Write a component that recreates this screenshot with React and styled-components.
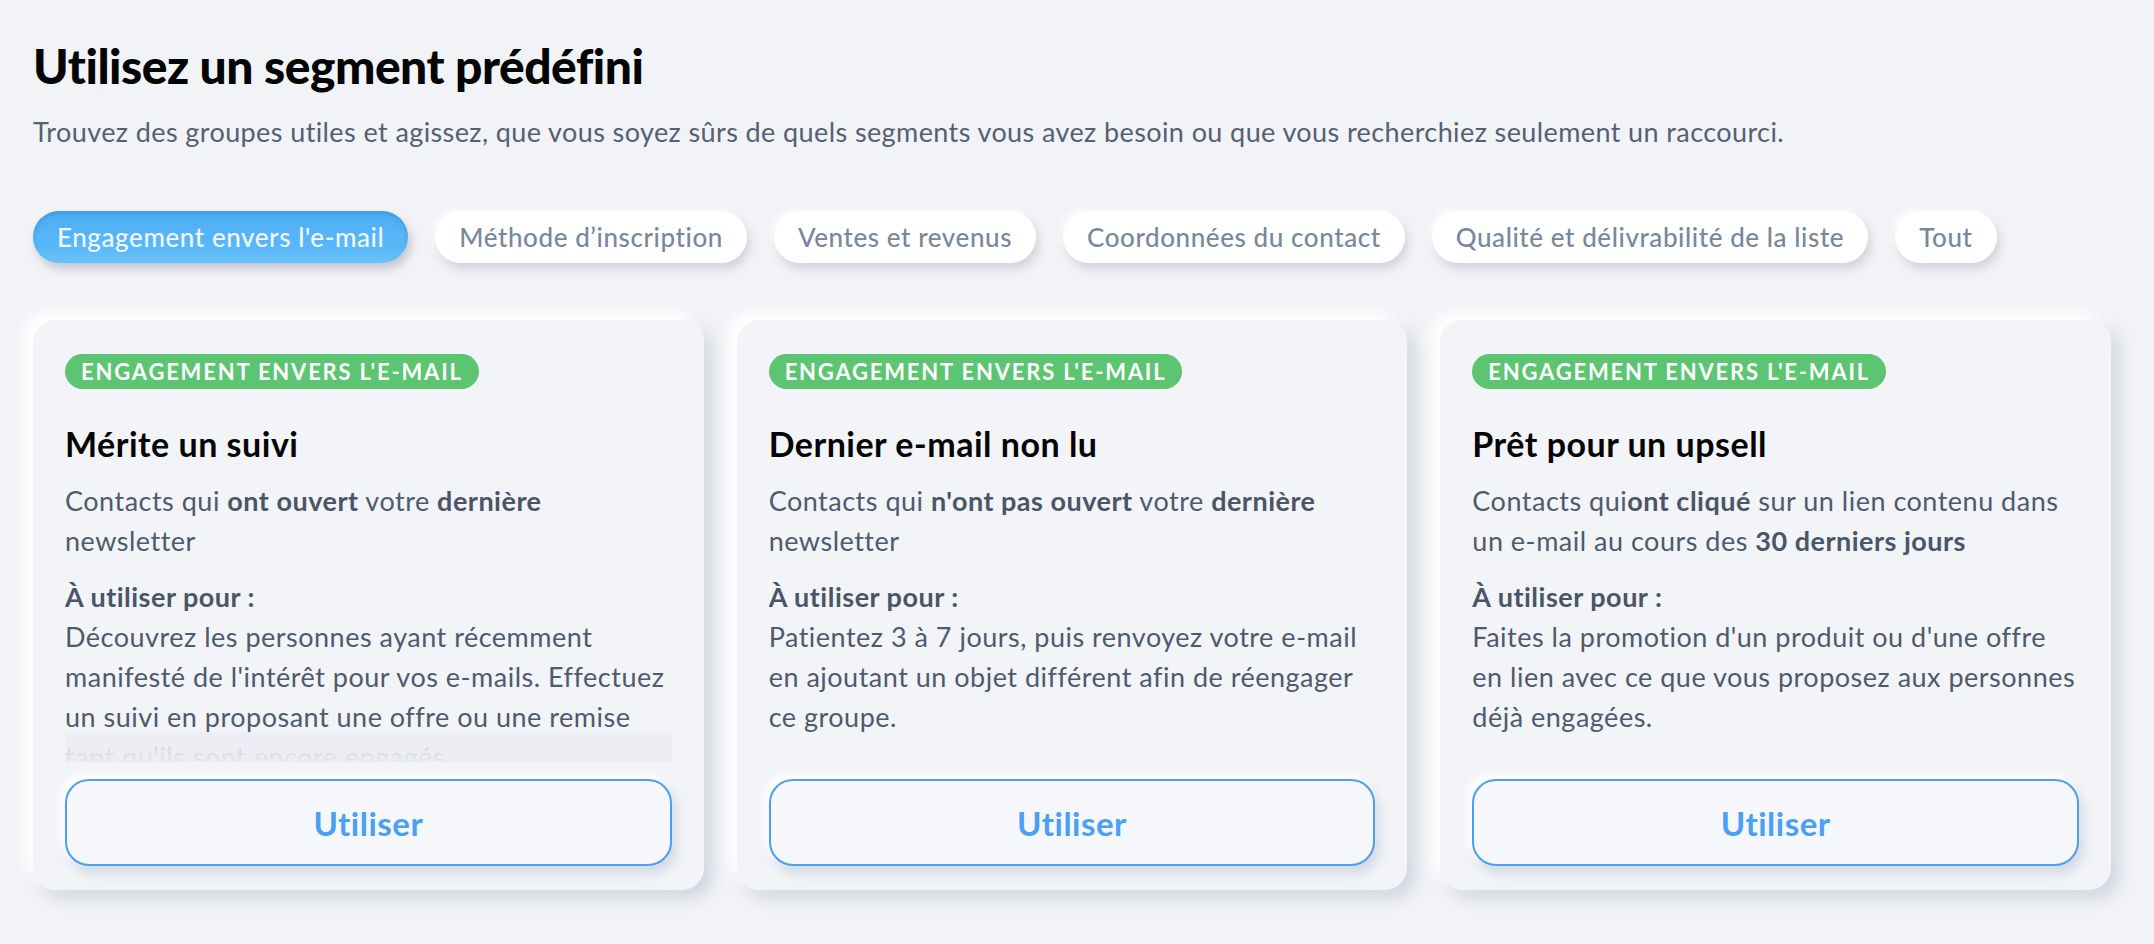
import React from 'react';
import styled, { createGlobalStyle } from 'styled-components';

const GlobalStyle = createGlobalStyle`
  * {
    box-sizing: border-box;
  }

  body {
    margin: 0;
    background-color: #f2f3f7;
    font-family: Lato, 'Noto Sans', sans-serif;
  }
`;

const Page = styled.div`
  padding: 38px 43px 40px 33px;
`;

const Title = styled.h1`
  margin: 0;
  font-size: 48px;
  line-height: 56px;
  font-weight: 900;
  color: #050505;
  letter-spacing: -0.5px;
`;

const Subtitle = styled.p`
  margin: 20px 0 0;
  font-size: 27px;
  line-height: 36px;
  letter-spacing: 0.4px;
  color: #556074;
`;

const Tabs = styled.div`
  display: flex;
  gap: 27px;
  margin-top: 61px;
`;

const Tab = styled.button`
  height: 52px;
  padding: 0 24px;
  border: none;
  border-radius: 26px;
  font-family: inherit;
  font-size: 26px;
  font-weight: 500;
  letter-spacing: 0.58px;
  cursor: pointer;
  color: ${({ $active }) => ($active ? '#f1f7fd' : '#78889c')};
  background: ${({ $active }) =>
    $active ? 'linear-gradient(180deg, #4eaef3 0%, #58b8f9 70%, #6cc2fa 100%)' : '#ffffff'};
  box-shadow: ${({ $active }) =>
    $active
      ? 'inset 0 3px 4px rgba(40, 120, 190, 0.35), 3px 6px 10px rgba(90, 100, 120, 0.3)'
      : '3px 6px 10px rgba(90, 100, 120, 0.22), -2px -2px 6px rgba(255, 255, 255, 0.9)'};
`;

const Grid = styled.div`
  display: grid;
  grid-template-columns: repeat(3, 1fr);
  gap: 33px;
  margin-top: 57px;
`;

const Card = styled.div`
  display: flex;
  flex-direction: column;
  height: 570px;
  padding: 34px 32px 24px;
  border-radius: 22px;
  background-color: #f2f4f8;
  box-shadow: -8px -8px 16px #ffffff, 8px 8px 16px rgba(165, 175, 192, 0.45);
`;

const Badge = styled.span`
  align-self: flex-start;
  height: 35px;
  padding: 0 16px;
  border-radius: 18px;
  background-color: #5bc571;
  color: #ffffff;
  font-size: 22px;
  line-height: 35px;
  font-weight: 700;
  letter-spacing: 1.8px;
  text-transform: uppercase;
`;

const CardTitle = styled.h2`
  margin: 34px 0 0;
  font-size: 34px;
  line-height: 42px;
  font-weight: 700;
  color: #050505;
  letter-spacing: 0.5px;
`;

const Body = styled.div`
  position: relative;
  flex: 1;
  margin-top: 16px;
  overflow: hidden;
  color: #4f5a6e;
  font-size: 27px;
  line-height: 40px;
  letter-spacing: 0.5px;

  p {
    margin: 0;
  }

  b {
    font-weight: 700;
    color: #4a5568;
  }
`;

const UseLabel = styled.p`
  && {
    margin-top: 16px;
  }
  font-weight: 700;
  color: #4a5568;
`;

const Fade = styled.div`
  position: absolute;
  left: 0;
  right: 0;
  bottom: 0;
  height: 30px;
  background: linear-gradient(180deg, rgba(235, 237, 242, 0.75) 0%, rgba(235, 237, 242, 0.96) 100%);
`;

const UseButton = styled.button`
  height: 87px;
  margin-top: 17px;
  border: 2px solid #4a9ff0;
  border-radius: 24px;
  background-color: #f6f7fb;
  color: #4aa0f5;
  font-family: inherit;
  font-size: 33px;
  font-weight: 700;
  letter-spacing: 0.5px;
  cursor: pointer;
  box-shadow: -5px -5px 10px #ffffff, 4px 7px 12px rgba(150, 160, 180, 0.35);
`;

const tabs = [
  "Engagement envers l'e-mail",
  'Méthode d’inscription',
  'Ventes et revenus',
  'Coordonnées du contact',
  'Qualité et délivrabilité de la liste',
  'Tout',
];

const segments = [
  {
    title: 'Mérite un suivi',
    desc: (
      <>
        Contacts qui <b>ont ouvert</b> votre <b>dernière</b> newsletter
      </>
    ),
    use: "Découvrez les personnes ayant récemment manifesté de l'intérêt pour vos e-mails. Effectuez un suivi en proposant une offre ou une remise tant qu'ils sont encore engagés.",
    clipped: true,
  },
  {
    title: 'Dernier e-mail non lu',
    desc: (
      <>
        Contacts qui <b>n'ont pas ouvert</b> votre <b>dernière</b> newsletter
      </>
    ),
    use: 'Patientez 3 à 7 jours, puis renvoyez votre e-mail en ajoutant un objet différent afin de réengager ce groupe.',
  },
  {
    title: 'Prêt pour un upsell',
    desc: (
      <>
        Contacts qui<b>ont cliqué</b> sur un lien contenu dans un e-mail au cours des{' '}
        <b>30 derniers jours</b>
      </>
    ),
    use: "Faites la promotion d'un produit ou d'une offre en lien avec ce que vous proposez aux personnes déjà engagées.",
  },
];

const App = () => {
  return (
    <Page>
      <GlobalStyle />
      <Title>Utilisez un segment prédéfini</Title>
      <Subtitle>
        Trouvez des groupes utiles et agissez, que vous soyez sûrs de quels segments vous avez besoin ou que vous
        recherchiez seulement un raccourci.
      </Subtitle>

      <Tabs>
        {tabs.map((tab, i) => (
          <Tab key={tab} $active={i === 0}>
            {tab}
          </Tab>
        ))}
      </Tabs>

      <Grid>
        {segments.map((seg) => (
          <Card key={seg.title}>
            <Badge>Engagement envers l'e-mail</Badge>
            <CardTitle>{seg.title}</CardTitle>
            <Body>
              <p>{seg.desc}</p>
              <UseLabel>À utiliser pour :</UseLabel>
              <p>{seg.use}</p>
              {seg.clipped && <Fade />}
            </Body>
            <UseButton>Utiliser</UseButton>
          </Card>
        ))}
      </Grid>
    </Page>
  );
};

export default App;
